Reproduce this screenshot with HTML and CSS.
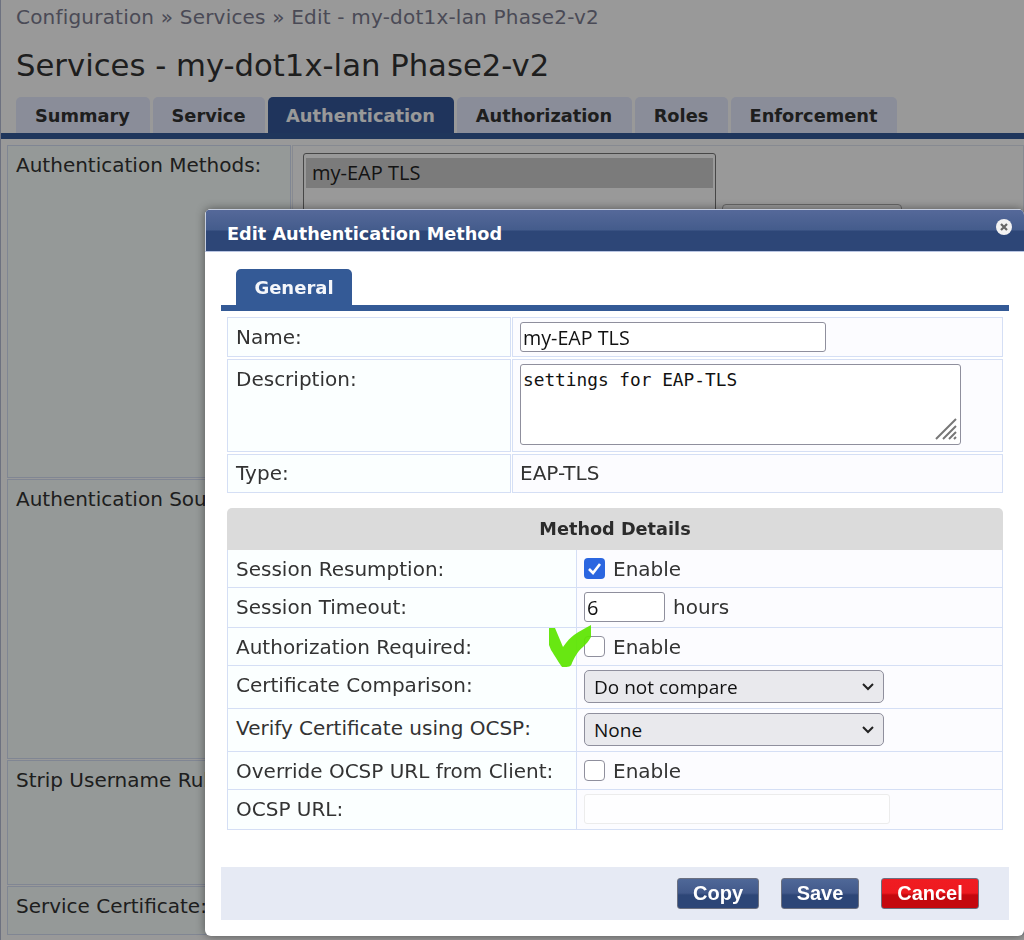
FILE: index.html
```html
<!DOCTYPE html>
<html lang="en">
<head>
    <meta charset="UTF-8">
    <title>Services - my-dot1x-lan Phase2-v2</title>
    <link rel="stylesheet" href="styles.css">
</head>
<body>
    <div class="page">
        <div class="breadcrumb">Configuration » Services » Edit - my-dot1x-lan Phase2-v2</div>
        <h1>Services - my-dot1x-lan Phase2-v2</h1>
        <div class="tabs">
            <a class="tab tab-summary">Summary</a>
            <a class="tab tab-service">Service</a>
            <a class="tab tab-auth active">Authentication</a>
            <a class="tab tab-authz">Authorization</a>
            <a class="tab tab-roles">Roles</a>
            <a class="tab tab-enf">Enforcement</a>
        </div>
        <div class="rows">
            <div class="row row-methods">
                <div class="label">Authentication Methods:</div>
                <div class="value">
                    <div class="listbox"><div class="option">my-EAP TLS</div></div>
                    <div class="side-box"></div>
                </div>
            </div>
            <div class="row row-sources">
                <div class="label">Authentication Sources:</div>
                <div class="value"></div>
            </div>
            <div class="row row-strip">
                <div class="label">Strip Username Rules:</div>
                <div class="value"></div>
            </div>
            <div class="row row-cert">
                <div class="label">Service Certificate:</div>
                <div class="value"></div>
            </div>
        </div>
    </div>

    <div class="overlay"></div>

    <div class="modal">
        <div class="modal-head">
            <span>Edit Authentication Method</span>
            <svg class="close" width="18" height="18" viewBox="0 0 18 18">
                <circle cx="9" cy="9" r="8" fill="#f2f2f2"/>
                <path d="M6 6l6 6M12 6l-6 6" stroke="#666" stroke-width="2.2"/>
            </svg>
        </div>
        <div class="modal-body">
            <div class="subtabs"><a class="subtab">General</a></div>

            <div class="form-row row-name">
                <div class="f-label">Name:</div>
                <div class="f-value"><input class="text name-input" type="text" value="my-EAP TLS"></div>
            </div>
            <div class="form-row row-desc">
                <div class="f-label">Description:</div>
                <div class="f-value">
                    <div class="desc-box">
                        settings for EAP-TLS
                        <svg class="grip" width="22" height="22" viewBox="0 0 22 22">
                            <path d="M1 21L21 1M8 21L21 8M14 21L21 14M19 21L21 19" stroke="#777" stroke-width="2" fill="none"/>
                        </svg>
                    </div>
                </div>
            </div>
            <div class="form-row row-type">
                <div class="f-label">Type:</div>
                <div class="f-value">EAP-TLS</div>
            </div>

            <div class="details-head">Method Details</div>
            <div class="details">
                <div class="d-row h38">
                    <div class="d-label">Session Resumption:</div>
                    <div class="d-value">
                        <span class="check checked">
                            <svg width="21" height="21" viewBox="0 0 21 21"><path d="M5 11l4 4 7-9" stroke="#fff" stroke-width="2.6" fill="none"/></svg>
                        </span>
                        Enable
                    </div>
                </div>
                <div class="d-row h40">
                    <div class="d-label">Session Timeout:</div>
                    <div class="d-value"><input class="text hours-input" type="text" value="6"> hours</div>
                </div>
                <div class="d-row h38">
                    <div class="d-label">Authorization Required:</div>
                    <div class="d-value"><span class="check"></span> Enable</div>
                </div>
                <div class="d-row h43">
                    <div class="d-label top">Certificate Comparison:</div>
                    <div class="d-value"><div class="select">Do not compare<svg width="12" height="8" viewBox="0 0 12 8"><path d="M1 1l5 5 5-5" stroke="#222" stroke-width="2" fill="none"/></svg></div></div>
                </div>
                <div class="d-row h43">
                    <div class="d-label top">Verify Certificate using OCSP:</div>
                    <div class="d-value"><div class="select">None<svg width="12" height="8" viewBox="0 0 12 8"><path d="M1 1l5 5 5-5" stroke="#222" stroke-width="2" fill="none"/></svg></div></div>
                </div>
                <div class="d-row h38">
                    <div class="d-label">Override OCSP URL from Client:</div>
                    <div class="d-value"><span class="check"></span> Enable</div>
                </div>
                <div class="d-row h40">
                    <div class="d-label">OCSP URL:</div>
                    <div class="d-value"><input class="text url-input" type="text" disabled></div>
                </div>
            </div>

            <div class="footer">
                <a class="btn btn-copy">Copy</a>
                <a class="btn btn-save">Save</a>
                <a class="btn btn-cancel">Cancel</a>
            </div>
        </div>
    </div>

    <!-- green tick drawn on the screenshot -->
    <svg class="tick" width="50" height="50" viewBox="0 0 50 50">
        <path d="M1 5H7L15 24C19 18 23 14 26 12C31 8 38 5 43 2V14C41 18 38 21 35 24C31 27 27 33 24 40C23 44 21 44 14 44C11 40 7 33 3 27L1 22Z" fill="#5ce500" fill-opacity="0.93"/>
    </svg>
</body>
</html>
```

FILE: styles.css
```css
html, body {
    margin: 0;
    padding: 0;
    height: 940px;
    overflow: hidden;
}

body {
    font-family: "DejaVu Sans", sans-serif;
    font-size: 20px;
    color: #333;
    background-color: #fff;
}

/* page behind the dialog */
.page {
    border-left: 1px solid #b6bdd6;
    height: 940px;
    box-sizing: border-box;
    overflow: hidden;
}

.breadcrumb {
    padding: 6px 0 0 15px;
    height: 34px;
    line-height: 22px;
    letter-spacing: 0.2px;
    color: #7c7c90;
    white-space: nowrap;
}

h1 {
    margin: 0;
    padding: 7px 0 0 15px;
    height: 50px;
    line-height: 38px;
    font-size: 30.7px;
    font-weight: normal;
    color: #333;
}

.tabs {
    display: flex;
    gap: 3px;
    height: 36px;
    padding-left: 15px;
    border-bottom: 6px solid #345a9a;
}

.tab {
    display: flex;
    align-items: center;
    justify-content: center;
    padding-right: 1px;
    font-size: 17.8px;
    font-weight: bold;
    background-color: #e6ecff;
    border-radius: 5px 5px 0 0;
    box-sizing: border-box;
}

.tab-summary { width: 134px; }
.tab-service { width: 112px; }
.tab-auth { width: 186px; }
.tab-authz { width: 175px; }
.tab-roles { width: 93px; }
.tab-enf { width: 166px; }

.tab.active {
    background-color: #34589a;
    color: #fff;
}

.rows {
    padding: 6px 0 0 6px;
}

.row {
    display: grid;
    grid-template-columns: 284px 1fr;
    gap: 1px;
    margin-bottom: 1px;
}

.row-methods { height: 333px; }
.row-sources { height: 280px; }
.row-strip { height: 125px; }
.row-cert { height: 49px; }

.label {
    background-color: #f8fffd;
    border: 1px solid #d5dff5;
    padding: 8px;
    line-height: 22px;
    box-sizing: border-box;
    white-space: nowrap;
    overflow: hidden;
}

.value {
    border: 1px solid #e2e6f2;
    display: flex;
    gap: 6px;
    padding: 7px 0 0 10px;
    box-sizing: border-box;
}

.listbox {
    width: 413px;
    height: 200px;
    padding: 4px 2px;
    border: 1px solid #777;
    border-radius: 3px;
    box-sizing: border-box;
    background-color: #fff;
}

.option {
    height: 30px;
    line-height: 30px;
    padding-left: 6px;
    background-color: #cecece;
    color: #222;
    font-family: "Open Sans", sans-serif;
    font-size: 20px;
}

.side-box {
    width: 180px;
    height: 60px;
    margin-top: 51px;
    border: 1px solid #aaa;
    border-radius: 4px;
    box-sizing: border-box;
}

.overlay {
    position: fixed;
    top: 0;
    left: 0;
    width: 100%;
    height: 100%;
    background-color: rgba(0, 0, 0, 0.4);
}

/* dialog */
.modal {
    position: absolute;
    left: 205px;
    top: 209px;
    width: 819px;
    height: 727px;
    background-color: #fff;
    border-radius: 6px;
    box-shadow: 0 0 10px rgba(0, 0, 0, 0.45);
    overflow: hidden;
}

.modal-head {
    height: 42px;
    padding-left: 22px;
    line-height: 51px;
    font-size: 17.7px;
    font-weight: bold;
    color: #fff;
    background: linear-gradient(#56699a, #445c8c 21px, #2d4677 22px);
    border-bottom: 1px solid #b9c5e2;
    box-shadow: inset 0 1px 0 #c6cedf, inset 1px 0 0 #c6cedf;
    position: relative;
}

.close {
    position: absolute;
    right: 11px;
    top: 9px;
}

.modal-body {
    padding: 17px 15px 0 16px;
}

.subtabs {
    height: 36px;
    border-bottom: 6px solid #345a96;
    padding-left: 15px;
    margin-bottom: 6px;
}

.subtab {
    display: block;
    width: 116px;
    height: 36px;
    line-height: 38px;
    text-align: center;
    font-size: 18px;
    font-weight: bold;
    color: #f4f6fa;
    background-color: #345a96;
    border-radius: 5px 5px 0 0;
}

.form-row {
    display: grid;
    grid-template-columns: 284px 491px;
    gap: 1px;
    margin: 0 0 2px 6px;
}

.row-name { height: 40px; }
.row-desc { height: 93px; }
.row-type { height: 38px; }

.f-label, .f-value {
    border: 1px solid #d5dff5;
    box-sizing: border-box;
    line-height: 22px;
}

.f-label {
    background-color: #fbffff;
    padding: 8px;
}

.f-value {
    background-color: #fcfcff;
    padding: 4px 7px;
}

.row-type .f-value,
.row-type .f-label {
    padding-top: 7px;
}

.text {
    display: block;
    box-sizing: border-box;
    margin: 0;
    padding: 0 2px;
    border: 1px solid #8f8f9d;
    border-radius: 3px;
    background-color: #fff;
    color: #111;
    font-family: "Open Sans", sans-serif;
    font-size: 19.7px;
    outline: none;
}

.name-input {
    width: 306px;
    height: 30px;
}

.desc-box {
    position: relative;
    width: 441px;
    height: 81px;
    padding: 3px 2px;
    border: 1px solid #8f8f9d;
    border-radius: 3px;
    box-sizing: border-box;
    background-color: #fff;
    color: #111;
    font-family: "DejaVu Sans Mono", monospace;
    font-size: 17.8px;
    line-height: 24px;
}

.grip {
    position: absolute;
    right: 3px;
    bottom: 4px;
}

.details-head {
    margin: 16px 0 0 6px;
    width: 776px;
    height: 42px;
    line-height: 42px;
    text-align: center;
    font-size: 17.7px;
    font-weight: bold;
    color: #2b2b2b;
    background-color: #dbdbdb;
    border-radius: 5px 5px 0 0;
}

.details {
    margin-left: 6px;
    width: 776px;
    border-left: 1px solid #d5dff5;
    border-right: 1px solid #d5dff5;
    box-sizing: border-box;
}

.d-row {
    display: grid;
    grid-template-columns: 349px 1fr;
    border-bottom: 1px solid #d5dff5;
    box-sizing: border-box;
}

.h38 { height: 38px; }
.h40 { height: 40px; }
.h43 { height: 43px; }

.d-label {
    background-color: #fbffff;
    border-right: 1px solid #d5dff5;
    padding-left: 8px;
    display: flex;
    align-items: center;
}

.h40 .d-label {
    padding-bottom: 2px;
}

.d-label.top {
    align-items: flex-start;
    padding-top: 8px;
    line-height: 22px;
}

.d-value {
    background-color: #fcfcff;
    padding-left: 7px;
    display: flex;
    align-items: center;
    gap: 8px;
}

.h40 .d-value,
.h43 .d-value {
    padding-bottom: 1px;
}

.check {
    display: block;
    width: 21px;
    height: 21px;
    box-sizing: border-box;
    border: 1px solid #8f8f9d;
    border-radius: 4px;
    background-color: #fff;
}

.check.checked {
    border: none;
    background-color: #2b66e0;
}

.check svg {
    display: block;
}

.hours-input {
    width: 81px;
    height: 30px;
    font-size: 20px;
}

.url-input {
    width: 306px;
    height: 30px;
    border-color: #ececec;
    background-color: #fefeff;
}

.select {
    display: flex;
    align-items: center;
    justify-content: space-between;
    width: 300px;
    height: 33px;
    padding: 1px 9px 0;
    box-sizing: border-box;
    border: 1px solid #8f8f9d;
    border-radius: 5px;
    background-color: #e9e9ed;
    color: #111;
    font-family: "Open Sans", sans-serif;
    font-size: 19px;
}

.footer {
    display: flex;
    justify-content: flex-end;
    gap: 22px;
    height: 53px;
    margin-top: 37px;
    padding: 11px 30px 0 0;
    background-color: #e6eaf4;
    box-sizing: border-box;
}

.btn {
    display: block;
    height: 31px;
    line-height: 29px;
    text-align: center;
    box-sizing: border-box;
    border: 1px solid #6b7080;
    border-radius: 3px;
    font-family: "Liberation Sans", sans-serif;
    font-size: 20px;
    font-weight: bold;
    color: #fff;
    background: linear-gradient(#4f6898, #42598a 14px, #2d4677 16px);
}

.btn-copy { width: 82px; }
.btn-save { width: 78px; }

.btn-cancel {
    width: 98px;
    background: linear-gradient(#f01c22, #ee1a20 14px, #c4080e 16px);
}

.tick {
    position: absolute;
    left: 548px;
    top: 623px;
}
```
